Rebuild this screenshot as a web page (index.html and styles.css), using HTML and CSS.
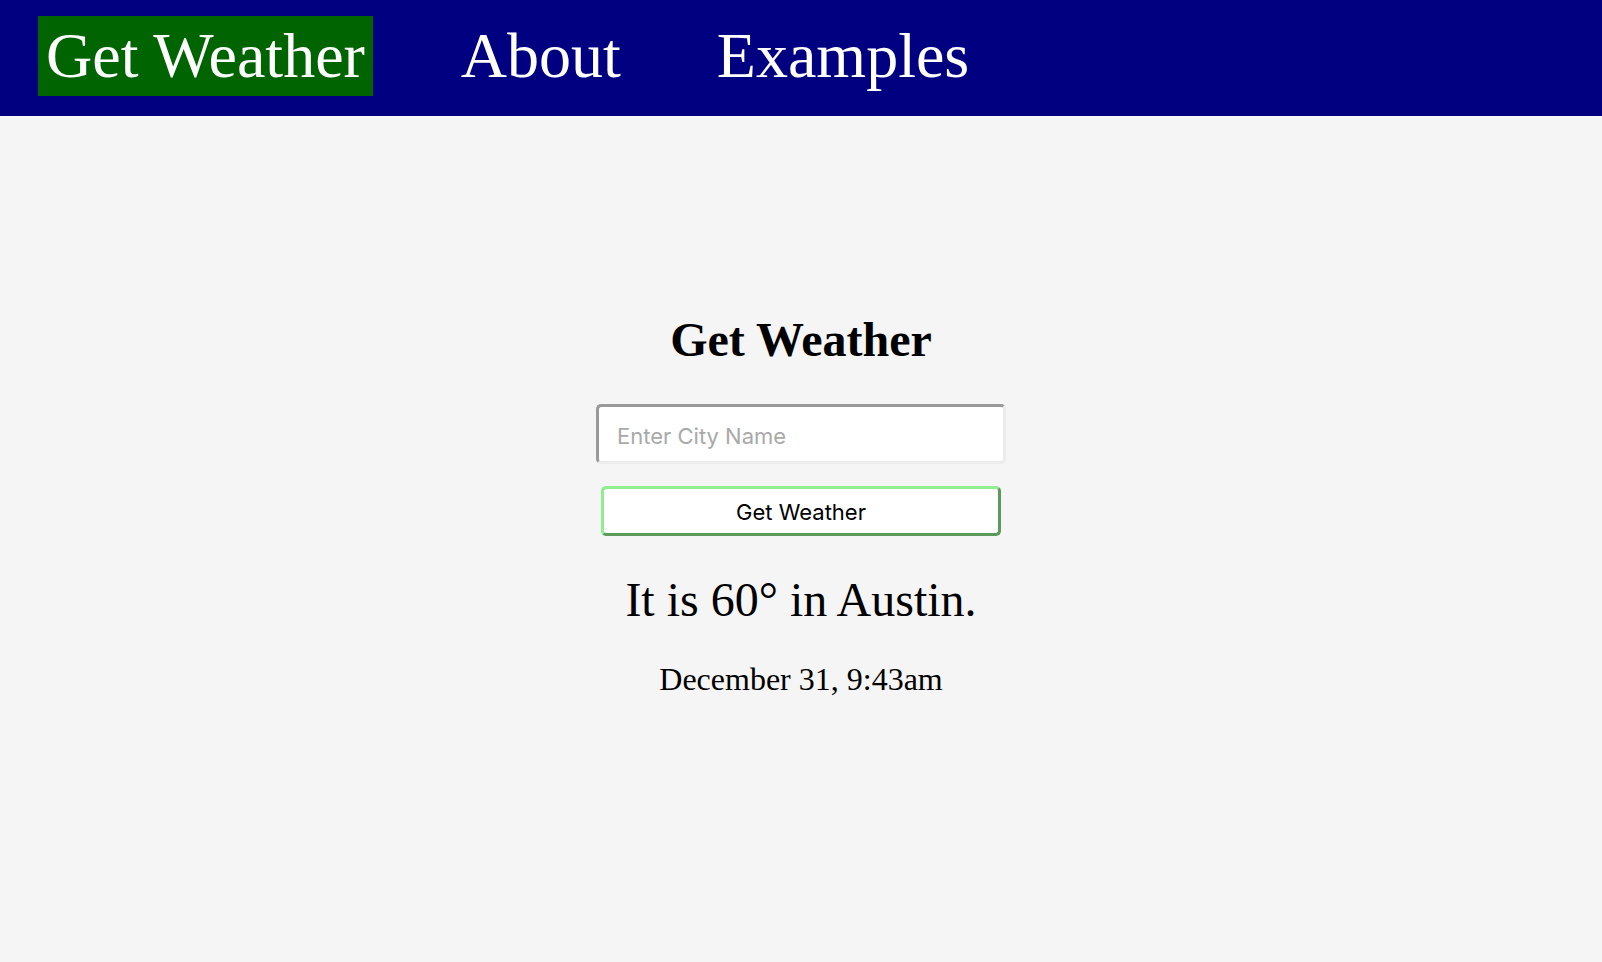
FILE: index.html
```html
<!DOCTYPE html>
<html lang="en">
<head>
<meta charset="utf-8">
<title>Get Weather</title>
<link rel="stylesheet" href="styles.css">
</head>
<body>
<nav class="topnav">
  <a class="navlink active" href="#">Get Weather</a>
  <a class="navlink" href="#">About</a>
  <a class="navlink" href="#">Examples</a>
</nav>
<main class="main">
  <h1 class="title">Get Weather</h1>
  <input class="city" type="text" placeholder="Enter City Name">
  <button class="submit" type="button">Get Weather</button>
  <p class="result">It is 60° in Austin.</p>
  <p class="stamp">December 31, 9:43am</p>
</main>
</body>
</html>
```

FILE: styles.css
```css
html, body {
  margin: 0;
  padding: 0;
  height: 100%;
}
body {
  background: #f5f5f5;
  font-family: "Liberation Serif", "Times New Roman", serif;
  color: #000;
}
.topnav {
  background: #000080;
  height: 116px;
  box-sizing: border-box;
  display: flex;
  align-items: flex-start;
  padding: 16px 0 0 38px;
  gap: 80px;
}
.navlink {
  display: block;
  color: #fff;
  text-decoration: none;
  font-size: 64px;
  line-height: 80px;
  height: 80px;
  padding: 0 8px;
}
.navlink.active {
  background: #006400;
}
.main {
  display: flex;
  flex-direction: column;
  align-items: center;
  padding-top: 196px;
}
.title {
  margin: 0;
  font-size: 48px;
  line-height: 56px;
  font-weight: bold;
}
.city {
  margin-top: 36px;
  width: 410px;
  height: 60px;
  box-sizing: border-box;
  border-style: solid;
  border-width: 3px;
  border-color: #9a9a9a #ececec #ececec #9a9a9a;
  border-radius: 5px;
  background: #fff;
  padding: 3px 18px 0;
  font-family: Inter, "Liberation Sans", sans-serif;
  font-size: 22px;
  outline: none;
}
.city::placeholder {
  color: #a9a9a9;
}
.submit {
  margin-top: 22px;
  width: 400px;
  height: 50px;
  box-sizing: border-box;
  border-style: solid;
  border-width: 3px;
  border-color: #90ee90 #5c9a5c #5c9a5c #90ee90;
  border-radius: 5px;
  background: #fff;
  color: #000;
  font-family: Inter, "Liberation Sans", sans-serif;
  font-size: 22px;
  padding: 1px 0 0;
}
.result {
  margin: 36px 0 0;
  font-size: 48px;
  line-height: 56px;
}
.stamp {
  margin: 31px 0 0;
  font-size: 32px;
  line-height: 40px;
}
```
